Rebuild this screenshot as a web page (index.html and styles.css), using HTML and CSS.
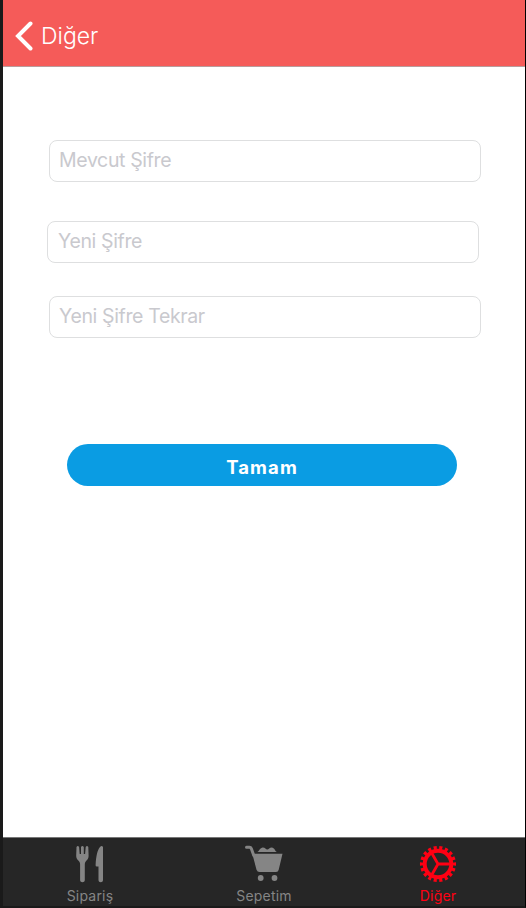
FILE: index.html
```html
<!DOCTYPE html>
<html lang="tr">
<head>
<meta charset="utf-8">
<title>Diğer</title>
<link rel="stylesheet" href="styles.css">
</head>
<body>
<div class="screen">
  <header class="navbar">
    <svg class="back" width="18" height="30" viewBox="0 0 18 30"><path d="M15.500 2.500 3 15l12.500 12.500"/></svg>
    <span class="title">Diğer</span>
  </header>
  <main class="content">
    <input class="field current" type="text" placeholder="Mevcut Şifre">
    <input class="field fresh" type="text" placeholder="Yeni Şifre">
    <input class="field repeat" type="text" placeholder="Yeni Şifre Tekrar">
    <button class="submit" type="button">Tamam</button>
  </main>
  <nav class="tabbar">
    <a class="tab">
      <svg width="40" height="40" viewBox="0 0 40 40">
        <path d="M6.500 3q1.300-2.200 2.600 0l.6 7h1.300V3q1.400-2.200 2.800 0v7h1.300l.6-7q1.300-2.200 2.600 0l.3 8.500c0 3.500-1.600 4.500-2.700 5.800-.8 1-1.100 2-1.100 3.500V36c0 3-4.700 3-4.700 0V20.800c0-1.500-.3-2.500-1.100-3.500C7.900 16 6.200 15 6.200 11.500z"/>
        <path d="M33 3v33c0 3-4.500 3-4.500 0V22.600h-1.700q-1.300 0-1.200-1.400C26 12.500 27.300 6 30 3q1.800-2 3 0z"/>
      </svg>
      <span>Sipariş</span>
    </a>
    <a class="tab">
      <svg width="40" height="40" viewBox="0 0 40 40">
        <path class="line" d="M2.500 3.300h3q1.300 0 1.800 1.300l2.500 7"/>
        <path d="M8.300 9.700h30.200L34.700 25.700q-.5 2.200-2.700 2.200H15.500q-2.200 0-3-2.200z"/>
        <path d="M13.200 8.100c1.800-.6 2.800-4.600 5.700-4.600 2.200 0 3 2 4.400 2s2.200-2 4.500-2c2.600 0 3.500 4 5.200 4.600z"/>
        <circle cx="16.700" cy="34" r="2.900"/><circle cx="30.500" cy="34" r="2.900"/>
      </svg>
      <span>Sepetim</span>
    </a>
    <a class="tab active">
      <svg width="40" height="40" viewBox="-20 -20 40 40">
        <circle class="teeth" r="16.300" pathLength="180"/>
        <circle class="ring" r="13.300"/>
        <path class="spokes" d="M0 0H12M0 0-6.200-10.700M0 0-6.200 10.700"/>
      </svg>
      <span>Diğer</span>
    </a>
  </nav>
</div>
</body>
</html>
```
FILE: styles.css
```css
* { box-sizing: border-box; }
body { margin: 0; font-family: Inter, "Liberation Sans", sans-serif; }
.screen {
  width: 526px;
  height: 908px;
  display: flex;
  flex-direction: column;
  background: #fff;
  border: solid #1a1a1a;
  border-width: 0 1px 2px 3px;
  border-right-color: #000;
  overflow: hidden;
}
.navbar {
  height: 67px;
  display: flex;
  align-items: center;
  padding: 5px 0 0 12px;
  background: #f55b59;
  border-bottom: 1px solid #b99c9c;
}
.back { fill: none; stroke: #fff; stroke-width: 4; stroke-linecap: round; }
.title { margin-left: 8px; color: #fff; font-size: 23px; font-weight: 300; }
.content {
  flex: 1;
  display: flex;
  flex-direction: column;
  padding: 73px 44px 0 46px;
}
.field {
  flex: none;
  width: 432px;
  height: 42px;
  padding: 0 9px 2px;
  border: 1px solid #dedfe0;
  border-radius: 8px;
  outline: 0;
  background: #fff;
  font: 400 19.500px Inter, "Liberation Sans", sans-serif;
  letter-spacing: -.36px;
}
.field::placeholder { color: #c9c9ce; opacity: 1; }
.fresh { margin: 39px 0 33px -2px; padding-left: 10px; }
.submit {
  flex: none;
  width: 390px;
  height: 42px;
  margin: 106px 0 0 18px;
  padding: 3px 0 0;
  border: 0;
  border-radius: 21px;
  background: #0a9ce3;
  color: #fff;
  font: 700 18.500px Inter, "Liberation Sans", sans-serif;
  letter-spacing: 1.100px;
}
.tabbar {
  flex: none;
  height: 69px;
  display: flex;
  border-top: 1px solid #777;
  background: #262626;
}
.tab {
  flex: 1;
  display: flex;
  flex-direction: column;
  align-items: center;
  padding-top: 6px;
  color: #858585;
  fill: currentColor;
  font-size: 14px;
  font-weight: 400;
  line-height: 16px;
}
.tab span { margin-top: 4px; letter-spacing: .2px; }
.active { color: #ff0013; }
.line { fill: none; stroke: currentColor; stroke-width: 3; stroke-linecap: round; }
.teeth, .ring, .spokes { fill: none; stroke: currentColor; }
.teeth { stroke-width: 3.500; stroke-dasharray: 5.500 4.500; stroke-dashoffset: 2.750; }
.ring { stroke-width: 4; }
.spokes { stroke-width: 2.800; }
```
